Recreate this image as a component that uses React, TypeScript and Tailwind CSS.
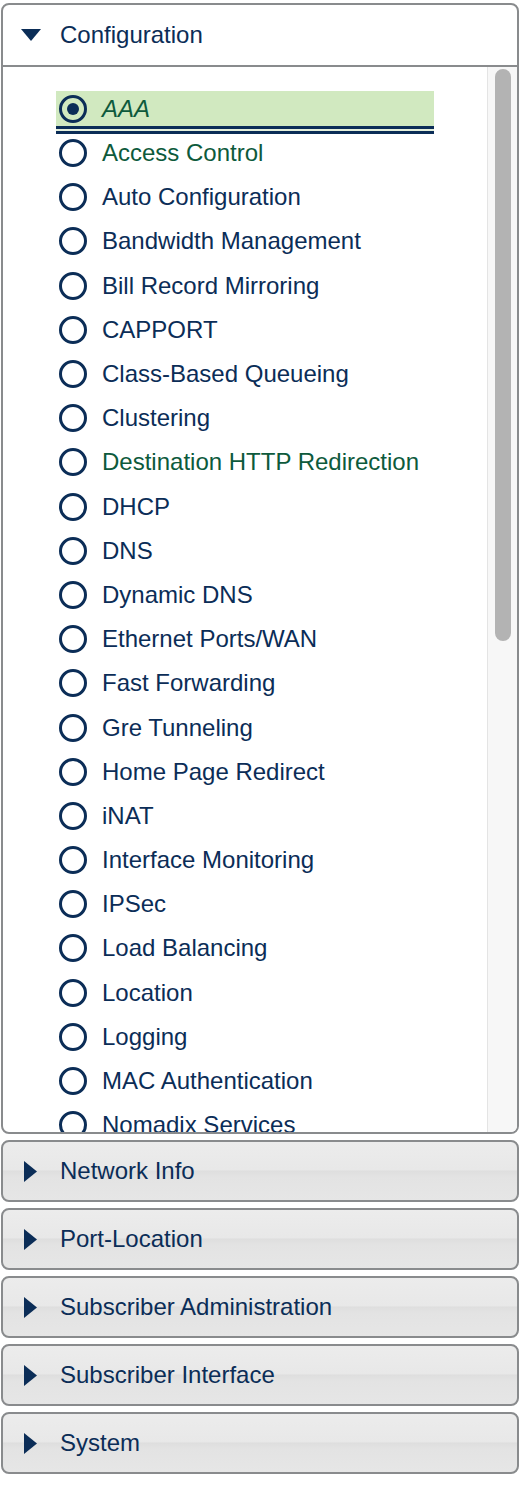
import React from 'react';

const items: { label: string; green?: boolean }[] = [
  { label: 'Access Control', green: true },
  { label: 'Auto Configuration' },
  { label: 'Bandwidth Management' },
  { label: 'Bill Record Mirroring' },
  { label: 'CAPPORT' },
  { label: 'Class-Based Queueing' },
  { label: 'Clustering' },
  { label: 'Destination HTTP Redirection', green: true },
  { label: 'DHCP' },
  { label: 'DNS' },
  { label: 'Dynamic DNS' },
  { label: 'Ethernet Ports/WAN' },
  { label: 'Fast Forwarding' },
  { label: 'Gre Tunneling' },
  { label: 'Home Page Redirect' },
  { label: 'iNAT' },
  { label: 'Interface Monitoring' },
  { label: 'IPSec' },
  { label: 'Load Balancing' },
  { label: 'Location' },
  { label: 'Logging' },
  { label: 'MAC Authentication' },
  { label: 'Nomadix Services' },
];

function Radio({ checked }: { checked?: boolean }) {
  return (
    <div className="w-[28px] h-[28px] rounded-full border-[3px] border-[#0b2d57] shrink-0 flex items-center justify-center">
      {checked && <div className="w-[12px] h-[12px] rounded-full bg-[#0b2d57]" />}
    </div>
  );
}

function Collapsed({ label }: { label: string }) {
  return (
    <div className="w-[518px] h-[62px] shrink-0 border-2 border-[#898b8d] rounded-[8px] bg-[linear-gradient(to_bottom,#ececec_0%,#e8e8e8_48%,#dedede_50%,#e3e3e3_60%,#e6e6e6_100%)] flex items-center pl-[21px]">
      <svg width="13" height="21" viewBox="0 0 13 21" className="shrink-0">
        <polygon points="0,0 13,10.5 0,21" fill="#0b2d57" />
      </svg>
      <span className="ml-[23px] text-[24px] leading-none text-[#0b2d57]">{label}</span>
    </div>
  );
}

export default function App() {
  return (
    <div className="w-[530px] h-[1486px] bg-white pt-[3px] pl-[1px] flex flex-col items-start gap-[6px] font-['Liberation_Sans',Arial,sans-serif] overflow-hidden">
      <div className="w-[518px] h-[1131px] shrink-0 border-2 border-[#898b8d] rounded-[8px] flex flex-col overflow-hidden bg-white">
        <div className="h-[62px] shrink-0 border-b-2 border-[#898b8d] flex items-center pl-[18px]">
          <svg width="20" height="12" viewBox="0 0 20 12" className="shrink-0">
            <polygon points="0,0 20,0 10,12" fill="#0b2d57" />
          </svg>
          <span className="ml-[19px] text-[24px] leading-none text-[#0b2d57]">Configuration</span>
        </div>
        <div className="flex-1 min-h-0 flex">
          <div className="flex-1 min-w-0 overflow-hidden pt-[24px] pl-[53px]">
            <div className="w-[378px]">
              <div className="h-[35px] bg-[#d1e9c0] flex items-center pl-[3px]">
                <Radio checked />
                <span className="ml-[15px] text-[24px] leading-none italic text-[#0d5a3c]">AAA</span>
              </div>
              <div className="h-[3px] bg-[#0b2d57]" />
              <div className="h-[2px] bg-[#e4efdc]" />
              <div className="h-[3px] bg-[#0b2d57]" />
            </div>
            <div className="-mt-[3px]">
              {items.map((it) => (
                <div key={it.label} className="h-[44.2px] flex items-center pl-[3px]">
                  <Radio />
                  <span
                    className={
                      'ml-[15px] text-[24px] leading-none whitespace-nowrap ' +
                      (it.green ? 'text-[#0d5a3c]' : 'text-[#0b2d57]')
                    }
                  >
                    {it.label}
                  </span>
                </div>
              ))}
            </div>
          </div>
          <div className="w-[30px] shrink-0 border-l border-[#e4e4e4] bg-[#f7f7f7] pt-[2px] pl-[7px]">
            <div className="w-[16px] h-[572px] rounded-full bg-[#b3b3b3]" />
          </div>
        </div>
      </div>
      <Collapsed label="Network Info" />
      <Collapsed label="Port-Location" />
      <Collapsed label="Subscriber Administration" />
      <Collapsed label="Subscriber Interface" />
      <Collapsed label="System" />
    </div>
  );
}
